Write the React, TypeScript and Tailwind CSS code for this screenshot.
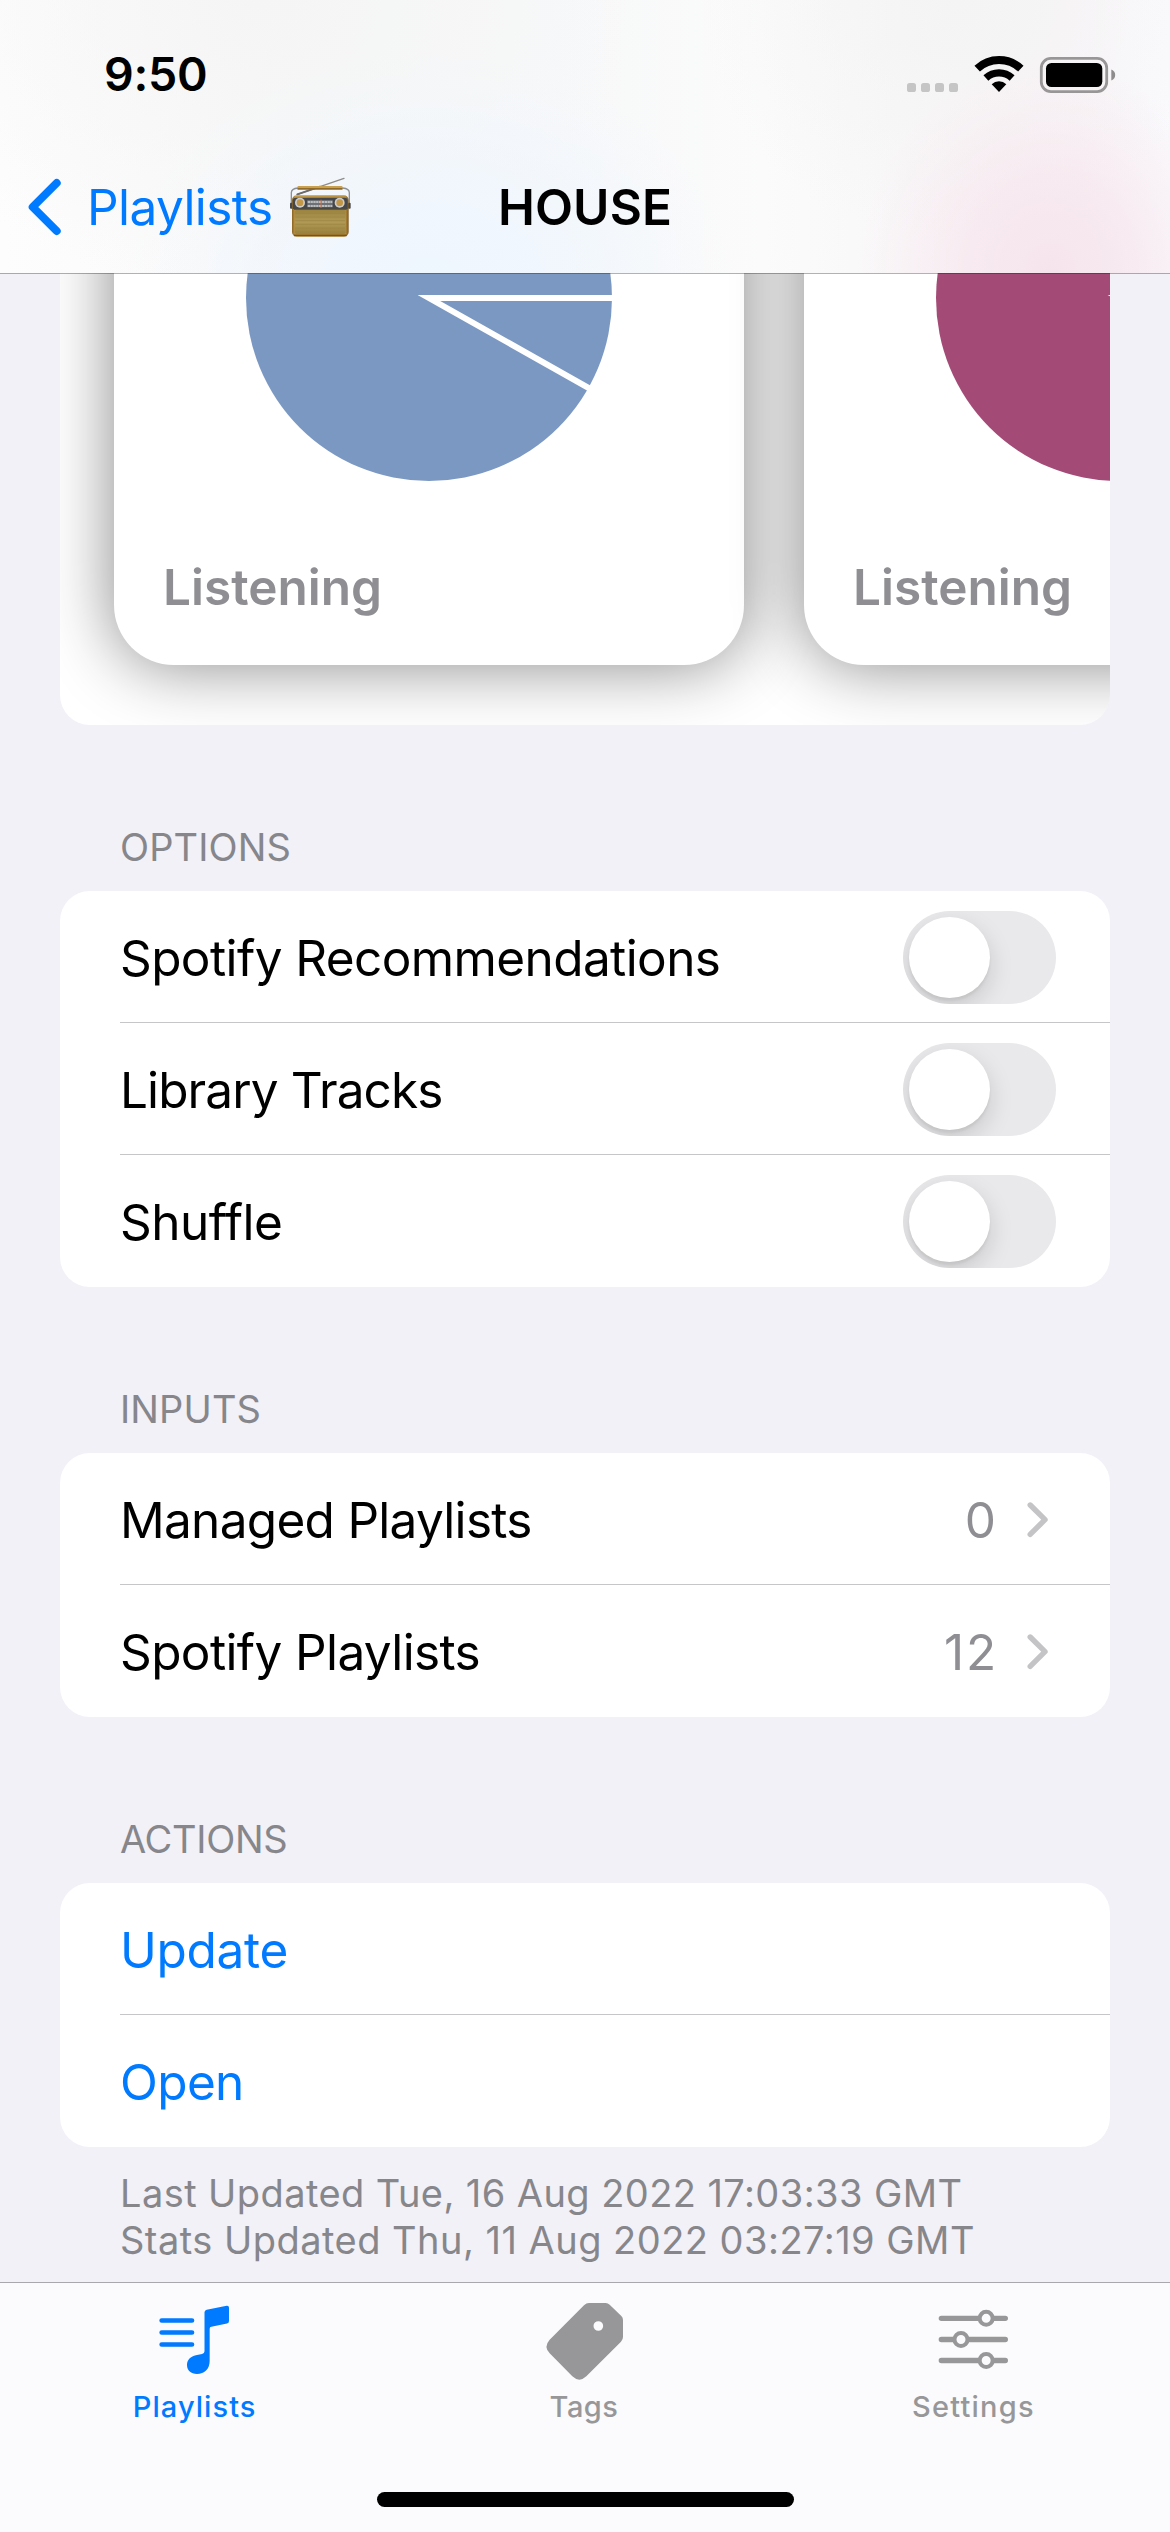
import React from "react";

function StatusIcons() {
  return (
    <svg width="212" height="47" viewBox="905 50 212 47" className="block">
      <g fill="#c5c5c6">
        <rect x="907" y="82" width="9" height="9" rx="2.6" />
        <rect x="921" y="82" width="9" height="9" rx="2.6" />
        <rect x="935" y="82" width="9" height="9" rx="2.6" />
        <rect x="949" y="82" width="9" height="9" rx="2.6" />
      </g>
      <g fill="none" stroke="#000">
        <path d="M977.2 67.6A32 32 0 0 1 1020.8 67.6" strokeWidth="8" />
        <path d="M985.9 77A19.2 19.2 0 0 1 1012.1 77" strokeWidth="7.2" />
      </g>
      <path d="M999 91L991.7 83.2A10.7 10.7 0 0 1 1006.3 83.2Z" fill="#000" />
      <rect x="1041.3" y="57.4" width="65.4" height="33.2" rx="9.5" fill="none" stroke="#999697" strokeWidth="2.8" />
      <rect x="1046" y="62" width="56.3" height="24" rx="5.5" fill="#000" />
      <path d="M1111.3 68.5C1114 69.5 1115.2 71.5 1115.2 74C1115.2 76.5 1114 78.5 1111.3 79.5Z" fill="#8f8c8d" />
    </svg>
  );
}

function Radio() {
  return (
    <svg width="64" height="62" viewBox="54 48 192 186" className="block">
      <defs>
        <linearGradient id="case" x1="0" x2="1" y1="0" y2="0">
          <stop offset="0" stopColor="#8a6420" />
          <stop offset="0.06" stopColor="#c39a4a" />
          <stop offset="0.94" stopColor="#b8903f" />
          <stop offset="1" stopColor="#7a5518" />
        </linearGradient>
        <linearGradient id="grille" x1="0" x2="0" y1="0" y2="1">
          <stop offset="0" stopColor="#9c8440" />
          <stop offset="0.5" stopColor="#b09a55" />
          <stop offset="1" stopColor="#9a803b" />
        </linearGradient>
      </defs>
      <path d="M82 103L222 55" stroke="#8f8b88" strokeWidth="4" strokeLinecap="round" />
      <path d="M82 103L150 80" stroke="#6f6b68" strokeWidth="6" strokeLinecap="round" />
      <path d="M64 138V98Q64 86 84 84H218Q238 86 238 98V138" fill="none" stroke="#8c9095" strokeWidth="4" />
      <rect x="82" y="78" width="136" height="9" rx="4" fill="#c9a04f" />
      <rect x="82" y="84" width="136" height="5" rx="2" fill="#8f6a28" />
      <rect x="60" y="128" width="8" height="18" rx="3" fill="#45464a" />
      <rect x="234" y="128" width="8" height="18" rx="3" fill="#45464a" />
      <rect x="66" y="106" width="170" height="124" rx="14" fill="url(#case)" />
      <path d="M68 147V122Q68 113 78 113H224Q233 113 233 122V147Z" fill="#45474b" />
      <rect x="74" y="150" width="153" height="72" rx="5" fill="url(#grille)" />
      <path d="M76 160H225M76 171H225M76 182H225M76 193H225M76 204H225M76 215H225" stroke="#9a8342" strokeWidth="2" />
      <path d="M72 148H230" stroke="#6a4a14" strokeWidth="3" />
      <path d="M72 226H230" stroke="#7a5416" strokeWidth="5" />
      <rect x="112" y="120" width="76" height="22" fill="#6d7075" />
      <path d="M113 126H187M113 138H187" stroke="#d5d6d4" strokeWidth="5" strokeDasharray="7 1.5" />
      <path d="M153 119V144" stroke="#e0703a" strokeWidth="2.5" />
      <circle cx="90" cy="128" r="15" fill="#cfcdc9" />
      <circle cx="90" cy="128" r="10" fill="#c29747" />
      <circle cx="209" cy="128" r="15" fill="#cfcdc9" />
      <circle cx="209" cy="128" r="10" fill="#c29747" />
    </svg>
  );
}

function Header() {
  return (
    <header className="relative z-10 h-[273px] shrink-0 bg-[#fafafa] bg-[radial-gradient(ellipse_190px_210px_at_1050px_273px,#f6e4ec_0%,#f6e4ecb0_40%,#f6e4ec00_100%),radial-gradient(ellipse_300px_230px_at_430px_285px,#eef6ff_0%,#eef6ffa0_45%,#eef6ff00_100%),radial-gradient(ellipse_260px_240px_at_960px_0px,#f4f4f4_0%,#f4f4f400_100%),radial-gradient(ellipse_380px_300px_at_260px_0px,#f5f5f5_0%,#f5f5f500_100%),linear-gradient(to_right,#fdfdfd_0px,#fbfbfb_150px,#f8f8f9_300px,#f7f8f9_560px,#fbfbfb_760px,#f9f8f9_900px,#f9f5f8_1080px,#fafafd_1170px)]">
      <div className="flex h-[141px] items-center justify-between pl-[104px] pr-[53px] pt-[8px]">
        <span className="text-[46.5px] font-semibold tracking-[-0.3px] text-black">9:50</span>
        <StatusIcons />
      </div>
      <nav className="grid h-[132px] grid-cols-[1fr_auto_1fr] items-center">
        <a className="flex items-center pl-[28px] text-[#007aff]">
          <svg width="34" height="58" viewBox="0 0 34 58" className="block">
            <path d="M28.7 5L4.7 29L28.7 53" fill="none" stroke="currentColor" strokeWidth="8" strokeLinecap="round" strokeLinejoin="round" />
          </svg>
          <span className="ml-[25px] mr-[16px] text-[49.5px] tracking-[-0.58px]">Playlists</span>
          <Radio />
        </a>
        <h1 className="text-[49.5px] font-semibold tracking-[0.1px] text-black">HOUSE</h1>
        <span />
      </nav>
      <div className="absolute inset-x-0 top-full h-px bg-black/30" />
    </header>
  );
}

function ChartCard({ color }: { color: string }) {
  return (
    <div className="flex h-[632px] w-[630px] shrink-0 flex-col justify-end rounded-[60px] bg-white pb-[48px] shadow-[0_0_68px_rgba(0,0,6,0.47)]">
      <svg width="366" height="366" viewBox="0 0 366 366" className="block self-center">
        <circle cx="183" cy="183" r="183" fill={color} />
        <path d="M370 183H183L346 274.9" fill="none" stroke="#fff" strokeWidth="6" strokeMiterlimit="10" />
      </svg>
      <p className="mt-[76px] pl-[49px] text-[49.5px] font-semibold leading-[60px] text-[#8e8e93]">Listening</p>
    </div>
  );
}

function Section({ title, titleClass, children }: { title: string; titleClass: string; children: React.ReactNode }) {
  return (
    <section className="pt-[98px]">
      <h2 className={`pl-[60px] text-[38px] leading-[48px] text-[#86868b] ${titleClass}`}>{title}</h2>
      <div className="mt-[20px] overflow-hidden rounded-[30px] bg-white">{children}</div>
    </section>
  );
}

function Row({ label, labelClass, last, children }: { label: string; labelClass: string; last?: boolean; children?: React.ReactNode }) {
  return (
    <div className="pl-[60px]">
      <div className={`flex h-[132px] items-center justify-between border-b pt-[2px] ${last ? "border-transparent" : "border-[#c6c6c8]"}`}>
        <span className={`text-[49.5px] leading-[60px] ${labelClass}`}>{label}</span>
        {children}
      </div>
    </div>
  );
}

function Toggle() {
  return (
    <div className="mr-[54px] h-[93px] w-[153px] overflow-hidden rounded-full bg-[#e9e9eb] p-[6px]">
      <div className="size-[81px] rounded-full bg-white shadow-[0_9px_24px_rgba(0,0,0,0.15),0_3px_3px_rgba(0,0,0,0.06)]" />
    </div>
  );
}

function Disclosure({ value, valueClass }: { value: string; valueClass: string }) {
  return (
    <div className="flex items-center pr-[62px]">
      <span className={`text-[49.5px] leading-[60px] text-[#8e8e93] ${valueClass}`}>{value}</span>
      <svg width="21" height="36" viewBox="0 0 21 36" className="block">
        <path d="M3.2 3L18 17.7L3.2 32.4" fill="none" stroke="#c4c4c7" strokeWidth="5.4" strokeLinecap="round" strokeLinejoin="round" />
      </svg>
    </div>
  );
}

function PlaylistIcon() {
  return (
    <svg width="120" height="100" viewBox="44 39 360 300" className="block">
      <path d="M124 151.5H215M124 187.5H215M124 223.5H215" stroke="currentColor" strokeWidth="14" strokeLinecap="round" />
      <path
        d="M252.500 127Q252.500 121 259 119.500L319 107.500Q326 106.500 326 113V153Q326 159 320 160.500L273 170.500Q268 171.500 268 176V273C268 297 252 312 230 312C212 312 200 301 200 285C200 268 212 259 230 255L245 252Q252.500 250 252.500 244Z"
        fill="currentColor"
      />
    </svg>
  );
}

function TagIcon() {
  return (
    <svg width="120" height="100" viewBox="12 39 360 300" className="block">
      <path
        fillRule="evenodd"
        d="M207 99H257Q264 99 269 104L304 138Q309 143 309 150V201Q309 209 303 215L199 319Q178 339 157 319L89 250Q70 230 89 209L192 106Q199 99 207 99ZM235 153.500A14.500 14.500 0 1 0 235 182.500A14.500 14.500 0 1 0 235 153.500Z"
        fill="currentColor"
      />
    </svg>
  );
}

function SlidersIcon() {
  return (
    <svg width="120" height="100" viewBox="70 39 360 300" className="block">
      <path d="M155 145H347M155 208.500H347M155 271.500H347" stroke="currentColor" strokeWidth="16" strokeLinecap="round" />
      <g fill="#fbfbfd" stroke="currentColor" strokeWidth="12">
        <circle cx="289.500" cy="145" r="19.500" />
        <circle cx="214" cy="208.500" r="19.500" />
        <circle cx="289.500" cy="271.500" r="19.500" />
      </g>
    </svg>
  );
}

function Tab({ icon, label, className }: { icon: React.ReactNode; label: string; className: string }) {
  return (
    <a className={`flex flex-col items-center ${className}`}>
      {icon}
      <span className="mt-[4px] text-[29px] font-medium leading-[40px]">{label}</span>
    </a>
  );
}

export default function App() {
  return (
    <div className="flex h-[2532px] w-[1170px] flex-col overflow-hidden bg-[#f2f1f7] font-['Inter',sans-serif] text-black">
      <Header />
      <main className="h-[2009px] shrink-0 overflow-hidden px-[60px]">
        <div className="flex h-[452px] overflow-hidden rounded-b-[30px] bg-white pl-[54px]">
          <div className="-mt-[240px] flex gap-[60px]">
            <ChartCard color="#7b98c2" />
            <ChartCard color="#a34b76" />
          </div>
        </div>

        <Section title="OPTIONS" titleClass="tracking-[0.14px]">
          <Row label="Spotify Recommendations" labelClass="tracking-[-0.6px]">
            <Toggle />
          </Row>
          <Row label="Library Tracks" labelClass="tracking-[-0.9px]">
            <Toggle />
          </Row>
          <Row label="Shuffle" labelClass="tracking-[-0.5px]" last>
            <Toggle />
          </Row>
        </Section>

        <Section title="INPUTS" titleClass="tracking-[0.14px]">
          <Row label="Managed Playlists" labelClass="tracking-[-0.7px]">
            <Disclosure value="0" valueClass="mr-[31px]" />
          </Row>
          <Row label="Spotify Playlists" labelClass="tracking-[-0.62px]" last>
            <Disclosure value="12" valueClass="mr-[29px] tracking-[1.8px]" />
          </Row>
        </Section>

        <Section title="ACTIONS" titleClass="tracking-[-0.3px]">
          <Row label="Update" labelClass="tracking-[-0.3px] text-[#007aff]" />
          <Row label="Open" labelClass="tracking-[-0.64px] text-[#007aff]" last />
        </Section>

        <div className="mt-[23px] pl-[60px] text-[38px] leading-[47px] text-[#86868b]">
          <p className="tracking-[0.42px]">Last Updated Tue, 16 Aug 2022 17:03:33 GMT</p>
          <p className="tracking-[0.47px]">Stats Updated Thu, 11 Aug 2022 03:27:19 GMT</p>
        </div>
      </main>

      <footer className="flex h-[250px] shrink-0 flex-col border-t border-[#a9a9ad] bg-[#fbfbfd]">
        <div className="mr-[2px] grid grid-cols-3">
          <Tab icon={<PlaylistIcon />} label="Playlists" className="tracking-[1.05px] text-[#007aff]" />
          <Tab icon={<TagIcon />} label="Tags" className="tracking-[0.48px] text-[#979799]" />
          <Tab icon={<SlidersIcon />} label="Settings" className="tracking-[1.22px] text-[#979799]" />
        </div>
        <div className="mt-[65px] h-[15px] w-[417px] self-center rounded-full bg-black" />
      </footer>
    </div>
  );
}
